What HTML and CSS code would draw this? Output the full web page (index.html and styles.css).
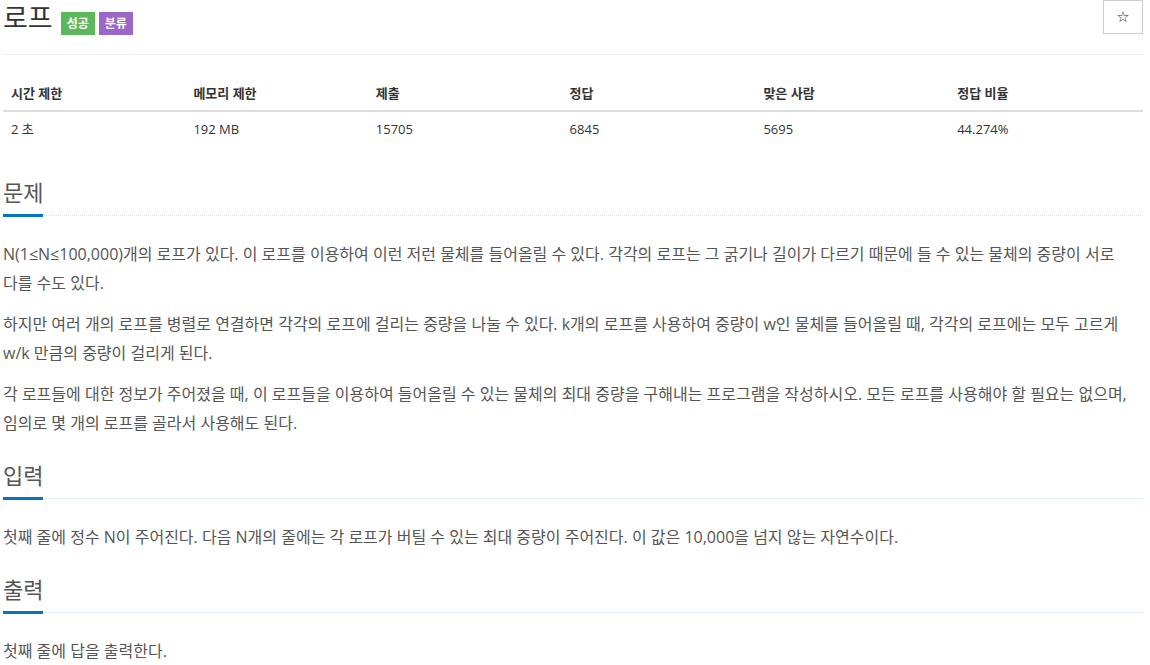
FILE: index.html
```html
<!DOCTYPE html>
<html lang="ko">
<head>
<meta charset="utf-8">
<link rel="stylesheet" href="styles.css">
</head>
<body>
<div class="page">
  <div class="header">
    <h1 class="title">로프 <span class="label green">성공</span><span class="label purple">분류</span></h1>
    <button class="star">☆</button>
  </div>
  <div class="stats">
    <div class="row head">
      <div>시간 제한</div><div>메모리 제한</div><div>제출</div><div>정답</div><div>맞은 사람</div><div>정답 비율</div>
    </div>
    <div class="row">
      <div>2 초</div><div>192 MB</div><div>15705</div><div>6845</div><div>5695</div><div>44.274%</div>
    </div>
  </div>

  <section class="sec">
    <h2 class="sec-title"><span>문제</span></h2>
    <div class="sec-body">
      <p>N(1≤N≤100,000)개의 로프가 있다. 이 로프를 이용하여 이런 저런 물체를 들어올릴 수 있다. 각각의 로프는 그 굵기나 길이가 다르기 때문에 들 수 있는 물체의 중량이 서로 다를 수도 있다.</p>
      <p>하지만 여러 개의 로프를 병렬로 연결하면 각각의 로프에 걸리는 중량을 나눌 수 있다. k개의 로프를 사용하여 중량이 w인 물체를 들어올릴 때, 각각의 로프에는 모두 고르게 w/k 만큼의 중량이 걸리게 된다.</p>
      <p>각 로프들에 대한 정보가 주어졌을 때, 이 로프들을 이용하여 들어올릴 수 있는 물체의 최대 중량을 구해내는 프로그램을 작성하시오. 모든 로프를 사용해야 할 필요는 없으며, 임의로 몇 개의 로프를 골라서 사용해도 된다.</p>
    </div>
  </section>

  <section class="sec">
    <h2 class="sec-title"><span>입력</span></h2>
    <div class="sec-body">
      <p>첫째 줄에 정수 N이 주어진다. 다음 N개의 줄에는 각 로프가 버틸 수 있는 최대 중량이 주어진다. 이 값은 10,000을 넘지 않는 자연수이다.</p>
    </div>
  </section>

  <section class="sec">
    <h2 class="sec-title"><span>출력</span></h2>
    <div class="sec-body">
      <p>첫째 줄에 답을 출력한다.</p>
    </div>
  </section>
</div>
</body>
</html>
```
FILE: styles.css
```css
* { box-sizing: border-box; }
html, body { margin: 0; padding: 0; background: #fff; }
body {
  font-family: "Open Sans", "Noto Sans CJK KR", sans-serif;
  font-size: 14px;
  color: #333;
  overflow: hidden;
}
.page { width: 1140px; margin-left: 3px; }
.header {
  display: flex;
  justify-content: space-between;
  align-items: flex-start;
  border-bottom: 1px solid #eee;
  height: 55px;
}
.title {
  margin: 0;
  font-size: 27px;
  font-weight: 400;
  line-height: 34px;
  color: #333;
  display: flex;
  align-items: center;
}
.label {
  display: inline-block;
  color: #fff;
  font-size: 12px;
  font-weight: 700;
  height: 23px;
  line-height: 23px;
  padding: 0 6px;
  margin-top: 12px;
}
.green { background: #5cb85c; margin-left: 8px; }
.purple { background: #9b66c8; margin-left: 4px; }
.star {
  width: 40px;
  height: 34px;
  border: 1px solid #ccc;
  background: #fff;
  font-size: 15px;
  color: #222;
  padding: 0;
  font-family: "DejaVu Sans", sans-serif;
}
.stats { margin-top: 21px; }
.row {
  display: grid;
  grid-template-columns: 16% 16% 17% 17% 17% 17%;
  font-size: 13px;
}
.row > div { padding: 8px; line-height: 18px; }
.row.head { font-weight: 700; border-bottom: 2px solid #ddd; }
.sec { margin-top: 20px; }
.stats + .sec { margin-top: 29px; }
.sec-title {
  margin: 0;
  display: flex;
  font-size: 22px;
  font-weight: 400;
  color: #555;
  border-bottom: 1px dotted #d3e0ee;
}
.sec-title span {
  line-height: 34px;
  padding-bottom: 5px;
  border-bottom: 3px solid #0076c0;
  margin-bottom: -2px;
}
.sec-body { padding-top: 24px; }
.sec-body p {
  margin: 0 0 12px;
  font-size: 16px;
  line-height: 29px;
  color: #555;
  word-break: keep-all;
}
.sec-body p:last-child { margin-bottom: 0; }
```
